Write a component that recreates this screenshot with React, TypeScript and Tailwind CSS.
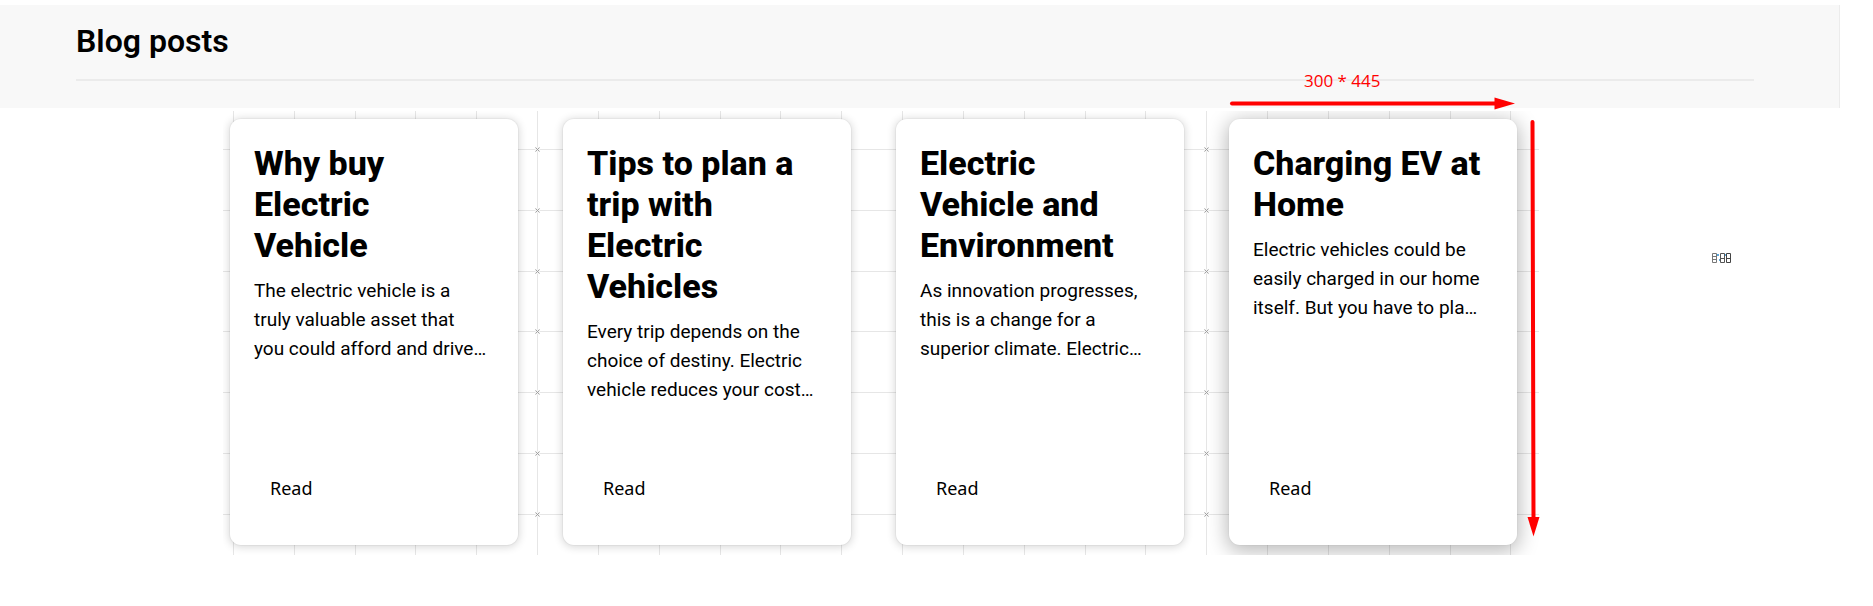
type Post = { title: string; summary: string; raised?: boolean };

const posts: Post[] = [
  {
    title: "Why buy\nElectric\nVehicle",
    summary: "The electric vehicle is a\ntruly valuable asset that\nyou could afford and drive…",
  },
  {
    title: "Tips to plan a\ntrip with\nElectric\nVehicles",
    summary: "Every trip depends on the\nchoice of destiny. Electric\nvehicle reduces your cost…",
  },
  {
    title: "Electric\nVehicle and\nEnvironment",
    summary: "As innovation progresses,\nthis is a change for a\nsuperior climate. Electric…",
  },
  {
    title: "Charging EV at\nHome",
    summary: "Electric vehicles could be\neasily charged in our home\nitself. But you have to pla…",
    raised: true,
  },
];

const columns = Array.from({ length: 22 }, (_, i) => Math.round(10 + i * 60.83));
const rows = Array.from({ length: 7 }, (_, i) => Math.round(38 + i * 60.83));
const jointColumns = [columns[5], columns[16]];

function GridBackdrop() {
  return (
    <svg className="absolute inset-0 h-full w-full" aria-hidden="true">
      <g fill="#e6e6e6">
        {columns.map((x) => (
          <rect key={x} x={x} y="0" width="1" height="100%" />
        ))}
        {rows.map((y) => (
          <rect key={y} x="0" y={y} width="100%" height="1" />
        ))}
      </g>
      {jointColumns.map((x) =>
        rows.map((y) => (
          <g key={`${x}-${y}`}>
            <rect x={x - 2} y={y - 2} width="5" height="5" fill="#f4f4f4" />
            <path
              d={`M${x - 1.5} ${y - 1.5}l4 4m0 -4l-4 4`}
              stroke="#9a9a9a"
              strokeWidth="0.9"
            />
          </g>
        ))
      )}
    </svg>
  );
}

function Card({ title, summary, raised }: Post) {
  return (
    <article
      className={
        "flex min-h-[426px] flex-col rounded-[11px] bg-white px-6 pt-6 pb-[31px] " +
        (raised
          ? "shadow-[0_0_0_1px_rgba(0,0,0,0.02),0_4px_20px_2px_rgba(0,0,0,0.28)]"
          : "shadow-[0_0_0_1px_rgba(0,0,0,0.03),0_1px_8px_1px_rgba(0,0,0,0.16)]")
      }
    >
      <h2 className="font-['Roboto',sans-serif] text-[34px] leading-[41px] font-extrabold whitespace-pre-line text-black">
        {title}
      </h2>
      <p className="mt-[10px] font-['Roboto',sans-serif] text-[19px] leading-[29px] whitespace-pre-line text-black">
        {summary}
      </p>
      <button
        type="button"
        className="mt-auto self-start px-4 py-2 font-['Noto_Sans',sans-serif] text-[18px] leading-[36px] text-black"
      >
        Read
      </button>
    </article>
  );
}

export default function App() {
  return (
    <main className="relative min-h-screen bg-white pt-[5px]">
      <header className="mr-[33px] border-r border-[#ececec] bg-[#f8f8f8] pr-[85px] pb-[27px] pl-[76px]">
        <h1 className="border-b-2 border-[#ebebeb] pt-4 pb-[18px] font-['Roboto',sans-serif] text-[32px] leading-[40px] font-semibold text-black">
          Blog posts
        </h1>
      </header>

      <div className="flex pt-[3px] pl-[223px]">
        <section className="relative w-full max-w-[1316px] overflow-hidden">
          <GridBackdrop />
          <div className="relative grid grid-cols-4 gap-[45px] pt-2 pr-[22px] pb-[10px] pl-[7px]">
            {posts.map((post) => (
              <Card key={post.title} {...post} />
            ))}
          </div>
        </section>
      </div>

      <span className="absolute top-[69px] left-[1304px] font-['Open_Sans',sans-serif] text-[17px] leading-[24px] whitespace-pre text-[#ff0000]">
        300 * 445
      </span>
      <svg
        className="absolute top-[96px] left-[1228px]"
        width="316"
        height="444"
        viewBox="0 0 316 444"
        fill="#ff0000"
        aria-hidden="true"
      >
        <path d="M4 7.5H268" stroke="#ff0000" strokeWidth="4" strokeLinecap="round" />
        <path d="M266.5 1.5L287 7.5L266.5 13.5Z" />
        <path d="M304.5 26L305.5 423" stroke="#ff0000" strokeWidth="4" strokeLinecap="round" />
        <path d="M299.5 421L311.5 421L305.5 440.5Z" />
      </svg>
      <svg
        className="absolute top-[252px] left-[1711px]"
        width="22"
        height="12"
        viewBox="0 0 22 12"
        fill="none"
        aria-hidden="true"
      >
        <g stroke="#777">
          <path d="M1.5 1.5h4v9h-4zM1.5 4.5h4M1.5 7.5h4" />
          <path d="M9.5 1.5h4v9h-4zM9.5 6.5h4" stroke="#555" />
          <path d="M15.5 1.5h4v9h-4zM15.5 6.5h4" stroke="#444" />
        </g>
        <path d="M6 2h2v2h-2zM8 7h1v2h-1zM14 2h1v2h-1z" fill="#5aa9e0" />
      </svg>
    </main>
  );
}
